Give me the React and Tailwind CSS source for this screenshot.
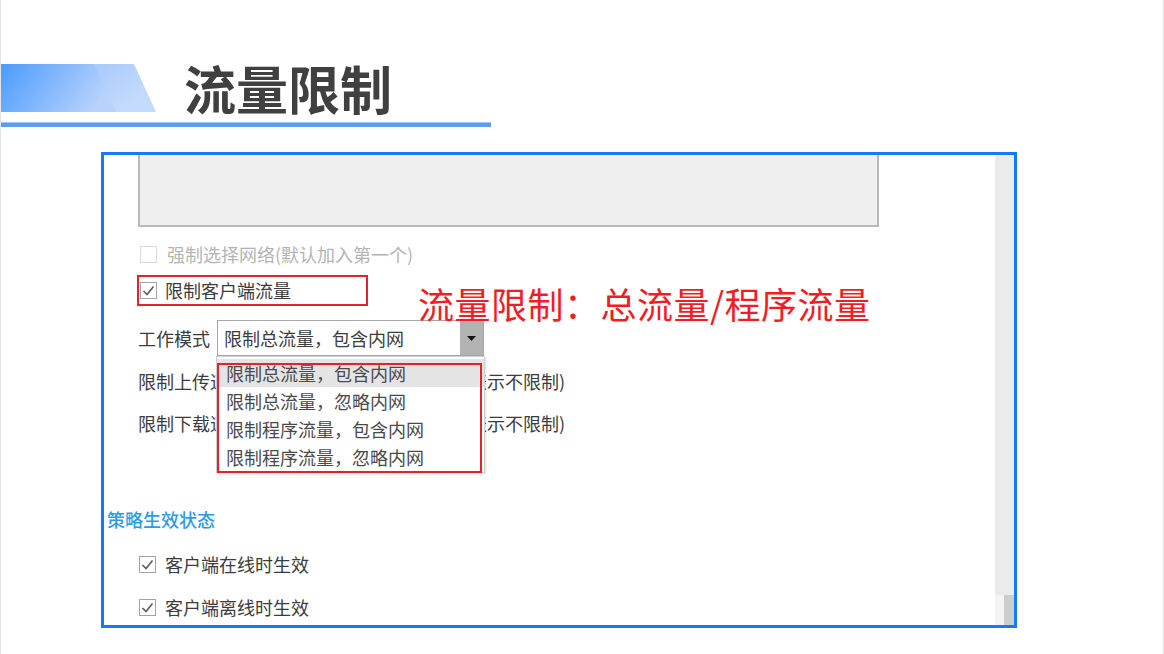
import React from "react";

const ui = { fontFamily: '"Noto Sans CJK SC", "Noto Sans", sans-serif' };

const modes = [
  "限制总流量，包含内网",
  "限制总流量，忽略内网",
  "限制程序流量，包含内网",
  "限制程序流量，忽略内网",
];

const Check = ({ checked = true, disabled = false }) => (
  <span
    className={`flex h-[17px] w-[17px] shrink-0 items-center justify-center border bg-white ${
      disabled ? "border-[#dadada]" : "border-[#a3a3a3]"
    }`}
  >
    {checked && (
      <svg width="15" height="15" viewBox="0 0 15 15">
        <polyline points="2.5,8 6,11.5 12.5,3.5" fill="none" stroke="#5a5a5a" strokeWidth="1.6" />
      </svg>
    )}
  </span>
);

const Band = () => (
  <svg width="155" height="48" viewBox="0 0 155 48">
    <defs>
      <linearGradient id="bandDark" x1="0" y1="0" x2="1" y2="0.3">
        <stop offset="0" stopColor="#4b9bfe" />
        <stop offset="1" stopColor="#b7d2fb" />
      </linearGradient>
      <linearGradient id="bandLight" x1="0" y1="0" x2="1" y2="0.4">
        <stop offset="0" stopColor="#86b9fc" />
        <stop offset="1" stopColor="#c3dafc" />
      </linearGradient>
    </defs>
    <polygon points="0,0 133,0 155,48 0,48" fill="url(#bandLight)" />
    <polygon points="0,0 93,0 115,48 0,48" fill="url(#bandDark)" />
  </svg>
);

export default function App() {
  return (
    <div className="h-[654px] w-[1164px] overflow-hidden border-x border-[#e4e4e4] bg-white" style={ui}>
      {/* page heading */}
      <div className="mt-[64px] flex h-[48px] items-center">
        <Band />
        <h1 className="ml-[28px] text-[52px] font-bold leading-[48px] text-[#404040]">流量限制</h1>
      </div>
      <div className="mt-[10px] h-[5px] w-[490px] border-t border-[#9cc4f8] bg-[#5b9df5]" />

      {/* settings panel */}
      <div className="relative ml-[100px] mt-[25px] flex h-[476px] w-[916px] border-[3px] border-[#1677ff] bg-white">
        <div className="relative flex-1 overflow-hidden text-[18px] text-[#3c3c3c]">
          <div className="ml-[34px] h-[72px] w-[741px] border-x-2 border-b-2 border-[#b9b9b9] bg-[#efefef]" />

          <div className="mt-[13px] flex h-[28px] items-center">
            <div className="ml-[36px] flex items-center gap-[10px] text-[#b4b4b4]">
              <Check checked={false} disabled />
              <span>强制选择网络(默认加入第一个)</span>
            </div>
          </div>

          <div className="ml-[33px] mt-[7px] flex h-[31px] w-[231px] items-center gap-[8px] border-2 border-[#e3232b] pl-[1px]">
            <Check />
            <span>限制客户端流量</span>
          </div>

          <div className="mt-[14px] flex h-[36px] items-center">
            <span className="ml-[34px] w-[79px]">工作模式</span>
            <div className="flex h-[36px] w-[267px] border border-[#a8a8a8] bg-white">
              <span className="flex-1 pl-[6px] leading-[34px]">限制总流量，包含内网</span>
              <span className="flex w-[23px] items-center justify-center bg-[#b3b3b3]">
                <svg width="9" height="5" viewBox="0 0 9 5">
                  <polygon points="0,0 9,0 4.5,5" fill="#111" />
                </svg>
              </span>
            </div>
          </div>

          <div className="mt-[11px] flex h-[28px] items-center">
            <span className="ml-[34px] w-[331px]">限制上传速度</span>
            <span>表示不限制)</span>
          </div>
          <div className="mt-[14px] flex h-[28px] items-center">
            <span className="ml-[34px] w-[331px]">限制下载速度</span>
            <span>表示不限制)</span>
          </div>

          <div className="mt-[68px] flex h-[28px] items-center pl-[3px] font-medium text-[#2c9be3]">策略生效状态</div>

          <div className="mt-[17px] flex h-[28px] items-center gap-[9px] pl-[35px]">
            <Check />
            <span>客户端在线时生效</span>
          </div>
          <div className="mt-[15px] flex h-[28px] items-center gap-[9px] pl-[35px]">
            <Check />
            <span>客户端离线时生效</span>
          </div>

          {/* open list of the mode select */}
          <div className="absolute left-[112px] top-[201px] w-[269px] border border-[#cfcfcf] bg-white pb-[1px] pt-[2px] text-[#4a4a4a] shadow-[1px_1px_2px_rgba(0,0,0,0.12)]">
            {modes.map((m, i) => (
              <div
                key={m}
                className={`flex h-[28px] items-center pl-[9px] ${i === 0 ? "bg-[#e4e4e4]" : ""}`}
              >
                {m}
              </div>
            ))}
            <div className="absolute left-0 top-[6px] h-[110px] w-[265px] border-2 border-[#e3232b]" />
          </div>

          <div className="absolute left-[314px] top-[126px] text-[36px] leading-[44px] tracking-[0.5px] text-[#f21d24]">
            流量限制：总流量/程序流量
          </div>
        </div>

        {/* vertical scrollbar */}
        <div className="flex w-[19px] flex-col bg-[#ebebeb]">
          <div className="flex-1" />
          <div className="flex h-[30px]">
            <div className="w-[9px] bg-[#f4f4f4]" />
            <div className="flex-1 bg-[#cdcdcd]" />
          </div>
        </div>
      </div>
    </div>
  );
}
